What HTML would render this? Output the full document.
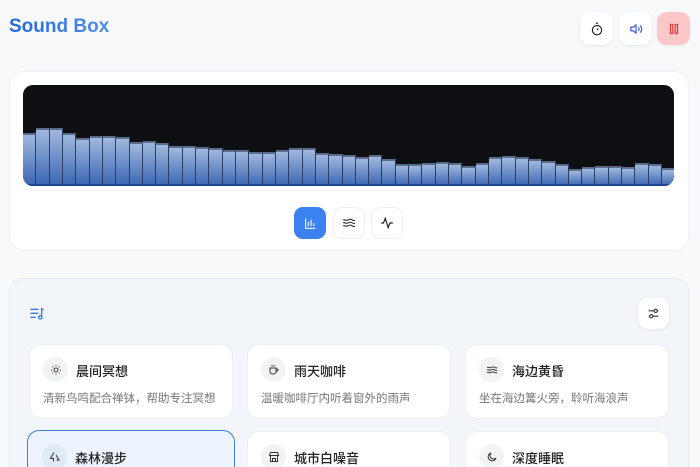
<!DOCTYPE html>
<html style="width:700px;height:467px;overflow:hidden"><head><meta charset="utf-8"><style>
*{box-sizing:border-box;margin:0;padding:0}
body{width:700px;height:467px;overflow:hidden;background:#f8f9fb;font-family:"Liberation Sans","Noto Sans CJK SC",sans-serif;position:relative}
.title{position:absolute;left:9px;top:16px;font-size:19px;font-weight:bold;background:linear-gradient(90deg,#2468d8,#4f8fe6);-webkit-background-clip:text;color:transparent}
.tb{position:absolute;top:12px;width:33px;height:33px;border-radius:10px;background:#fff;box-shadow:0 1px 3px rgba(0,0,0,.08);display:flex;align-items:center;justify-content:center}
.card1{position:absolute;left:9px;top:71px;width:680px;height:180px;background:#fff;border-radius:14px;border:1px solid #eef0f3}
.vis{position:absolute;left:23px;top:85px;width:651px;height:101px;background:#0e0f12;border-radius:10px;overflow:hidden;display:flex;align-items:flex-end}
.vis div{flex:1;background:linear-gradient(#a0b8dd,#3a65b2);border-right:1px solid #2a3d63;border-top:2px solid #5a6c8a}
.vis:after{content:"";position:absolute;left:0;right:0;bottom:0;height:2px;background:#1d4691}
.cb{position:absolute;top:207px;width:32px;height:32px;border-radius:9px;background:#fff;border:1px solid #eceef2;display:flex;align-items:center;justify-content:center}
.card2{position:absolute;left:9px;top:278px;width:680px;height:189px;background:#f2f6fb;border-radius:14px 14px 0 0;border:1px solid #e6ebf2;border-bottom:none}
.it{position:absolute;width:204px;height:75px;background:#fff;border-radius:12px;border:1px solid #eceff3}
.it.b{height:36px;border-bottom:none;border-radius:12px 12px 0 0}
.ic{position:absolute;left:13px;top:12px;width:25px;height:25px;border-radius:50%;background:#f2f3f5;display:flex;align-items:center;justify-content:center}
.t{position:absolute;left:46px;top:16px;font-size:13px;color:#222;font-weight:500}
.d{position:absolute;left:13px;top:45px;font-size:11.5px;color:#777}
</style></head><body>
<div class="title">Sound Box</div>
<div class="tb" style="left:580px"><svg width="14" height="14" viewBox="0 0 24 24" fill="none" stroke="#222" stroke-width="2"><circle cx="12" cy="14" r="8"/><path d="M12 14l2-3M10 2h4"/></svg></div>
<div class="tb" style="left:619px"><svg width="14" height="14" viewBox="0 0 24 24" fill="none" stroke="#3a56d8" stroke-width="2"><path d="M3 9h4l5-4v14l-5-4H3z"/><path d="M16 9a4 4 0 010 6M19 6a8 8 0 010 12"/></svg></div>
<div class="tb" style="left:657px;background:#fcc7c9"><svg width="14" height="14" viewBox="0 0 24 24" fill="none" stroke="#d33" stroke-width="2"><rect x="6" y="4" width="4" height="16" rx="1"/><rect x="14" y="4" width="4" height="16" rx="1"/></svg></div>
<div class="card1"></div>
<div class="vis">
<div style="height:53px"></div><div style="height:58px"></div><div style="height:58px"></div><div style="height:53px"></div><div style="height:48px"></div><div style="height:50px"></div><div style="height:50px"></div><div style="height:49px"></div><div style="height:44px"></div><div style="height:45px"></div><div style="height:43px"></div><div style="height:40px"></div><div style="height:40px"></div><div style="height:39px"></div><div style="height:38px"></div><div style="height:36px"></div><div style="height:36px"></div><div style="height:34px"></div><div style="height:34px"></div><div style="height:36px"></div><div style="height:38px"></div><div style="height:38px"></div><div style="height:33px"></div><div style="height:32px"></div><div style="height:31px"></div><div style="height:29px"></div><div style="height:31px"></div><div style="height:27px"></div><div style="height:22px"></div><div style="height:22px"></div><div style="height:23px"></div><div style="height:24px"></div><div style="height:23px"></div><div style="height:20px"></div><div style="height:23px"></div><div style="height:29px"></div><div style="height:30px"></div><div style="height:29px"></div><div style="height:27px"></div><div style="height:25px"></div><div style="height:22px"></div><div style="height:17px"></div><div style="height:19px"></div><div style="height:20px"></div><div style="height:20px"></div><div style="height:19px"></div><div style="height:23px"></div><div style="height:22px"></div><div style="height:18px;border-right:none"></div>
</div>
<div class="cb" style="left:294px;background:#3b82f0;border-color:#3b82f0"><svg width="13" height="13" viewBox="0 0 24 24" fill="none" stroke="#fff" stroke-width="2"><path d="M3 3v18h18M8 17V9M13 17V5M18 17v-6"/></svg></div>
<div class="cb" style="left:333px"><svg width="14" height="14" viewBox="0 0 24 24" fill="none" stroke="#222" stroke-width="1.8"><path d="M2 7c3-2 5 2 8 0s5-2 8 0 4 0 4 0M2 12c3-2 5 2 8 0s5-2 8 0 4 0 4 0M2 17c3-2 5 2 8 0s5-2 8 0 4 0 4 0"/></svg></div>
<div class="cb" style="left:371px"><svg width="14" height="14" viewBox="0 0 24 24" fill="none" stroke="#222" stroke-width="2"><path d="M2 12h4l3-8 5 16 3-8h5"/></svg></div>
<div class="card2"></div>
<svg style="position:absolute;left:29px;top:307px" width="16" height="14" viewBox="0 0 24 20" fill="none" stroke="#3a7be0" stroke-width="2"><path d="M2 3h12M2 9h12M2 15h8M19 14V2l3 2"/><circle cx="17" cy="15" r="2.5"/></svg>
<div class="tb" style="left:638px;top:298px;width:31px;height:31px"><svg width="13" height="13" viewBox="0 0 24 24" fill="none" stroke="#333" stroke-width="2"><path d="M3 7h10M19 7h2M3 17h2M11 17h10"/><circle cx="16" cy="7" r="3"/><circle cx="8" cy="17" r="3"/></svg></div>
<div class="it" style="left:29px;top:344px"><div class="ic"><svg width="12" height="12" viewBox="0 0 24 24" fill="none" stroke="#333" stroke-width="2"><circle cx="12" cy="12" r="4"/><path d="M12 2v2M12 20v2M2 12h2M20 12h2M5 5l1.5 1.5M17.5 17.5L19 19M5 19l1.5-1.5M17.5 6.5L19 5"/></svg></div><div class="t">晨间冥想</div><div class="d">清新鸟鸣配合禅钵，帮助专注冥想</div></div>
<div class="it" style="left:247px;top:344px"><div class="ic"><svg width="12" height="12" viewBox="0 0 24 24" fill="none" stroke="#333" stroke-width="2"><path d="M4 8h12v7a5 5 0 01-5 5H9a5 5 0 01-5-5zM16 10h2a2 2 0 010 4h-2M8 2v3M12 2v3"/></svg></div><div class="t">雨天咖啡</div><div class="d">温暖咖啡厅内听着窗外的雨声</div></div>
<div class="it" style="left:465px;top:344px"><div class="ic"><svg width="12" height="12" viewBox="0 0 24 24" fill="none" stroke="#333" stroke-width="2"><path d="M2 7c3-2 5 2 8 0s5-2 8 0 4 0 4 0M2 12c3-2 5 2 8 0s5-2 8 0 4 0 4 0M2 17c3-2 5 2 8 0s5-2 8 0 4 0 4 0"/></svg></div><div class="t">海边黄昏</div><div class="d">坐在海边篝火旁，聆听海浪声</div></div>
<div class="it b" style="left:27px;top:430px;width:208px;height:37px;border:1.5px solid #3b7fe6;border-bottom:none;background:#eef4fd"><div class="ic" style="background:#e0e9f7;top:13px;left:14px"><svg width="12" height="12" viewBox="0 0 24 24" fill="none" stroke="#333" stroke-width="2"><path d="M10 3l-7 12h6v6M14 8l6 10h-5"/></svg></div><div class="t" style="top:17px;left:47px">森林漫步</div></div>
<div class="it b" style="left:247px;top:431px"><div class="ic"><svg width="12" height="12" viewBox="0 0 24 24" fill="none" stroke="#333" stroke-width="2"><path d="M3 9l2-6h14l2 6zM5 9v12h14V9M9 21v-6h6v6"/></svg></div><div class="t">城市白噪音</div></div>
<div class="it b" style="left:465px;top:431px"><div class="ic"><svg width="12" height="12" viewBox="0 0 24 24" fill="none" stroke="#333" stroke-width="2"><path d="M20 14A8 8 0 1110 4a6 6 0 0010 10z"/></svg></div><div class="t">深度睡眠</div></div>
</body></html>
